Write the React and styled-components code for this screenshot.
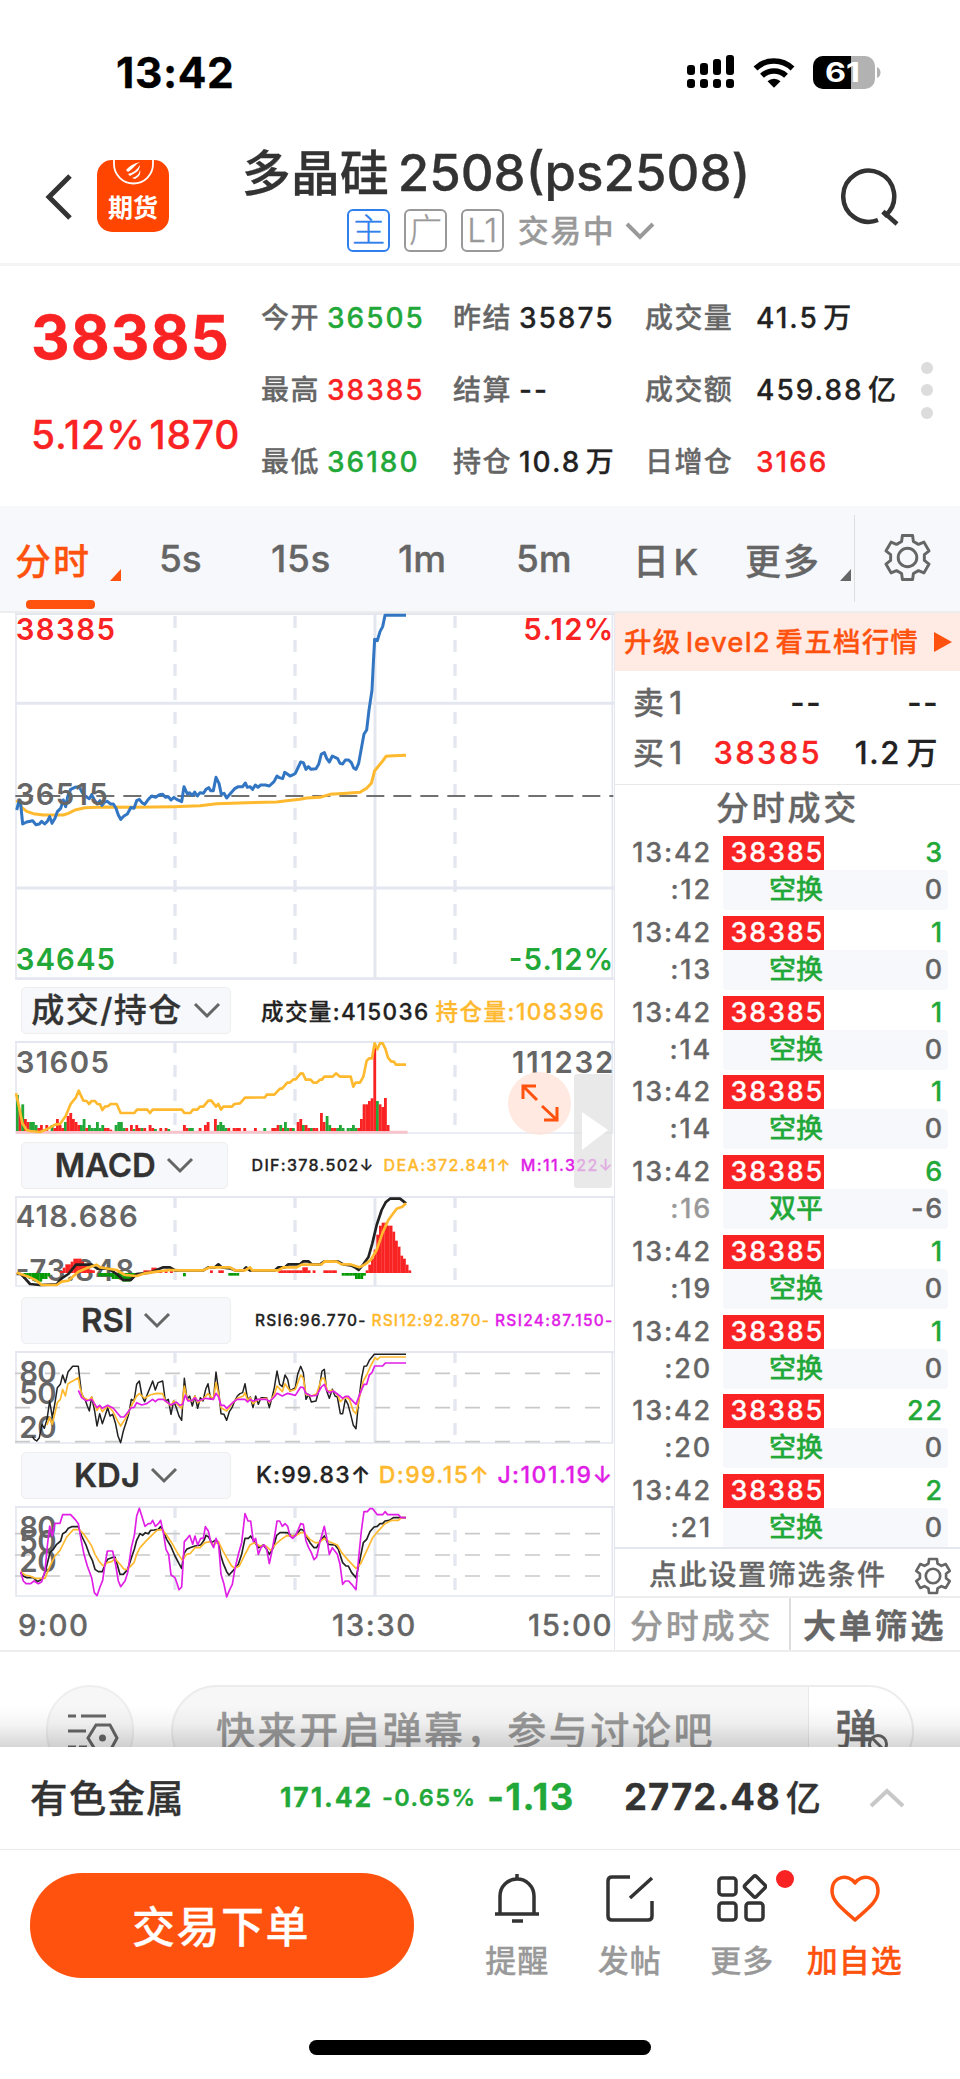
import React from "react";
import styled, { createGlobalStyle } from "styled-components";

const C = {
  red: "#fa2323", green: "#22a839", orange: "#ff520e", ink: "#222", dark: "#333",
  grey: "#666", light: "#999", line: "#e4e7ef", amber: "#ffb92e", magenta: "#e01ee6", blue: "#3276c3",
};

const Global = createGlobalStyle`
  * { box-sizing: border-box; }
  body { margin: 0; background: #fff; font-family: Inter, "Noto Sans CJK SC", sans-serif; font-weight: 500; -webkit-text-stroke: .3px; }
  svg { display: block; }
`;

const Screen = styled.main`
  width: 960px; height: 2079px; overflow: hidden; background: #fff; color: ${C.dark};
  display: flex; flex-direction: column;
`;
const Text = styled.span`
  font-size: ${(p) => p.$size}px; color: ${(p) => p.$color || "inherit"};
  font-weight: ${(p) => p.$weight || 500}; letter-spacing: ${(p) => p.$track || 0}px;
  word-spacing: ${(p) => p.$word || 0}px; line-height: 1.2; white-space: pre;
`;

/* status bar */
const StatusBar = styled.div`
  height: 144px; padding: 0 79px 0 116px; display: flex; align-items: center; justify-content: space-between;
`;
const StatusIcons = styled.div`display: flex; align-items: center; gap: 18px;`;

/* header */
const Header = styled.header`
  height: 122px; border-bottom: 3px solid #f4f4f4; display: grid;
  grid-template-columns: 97px 72px 147px 360px 165px 60px; padding-bottom: 8px;
`;
const HeaderSlot = styled.div`padding-top: ${(p) => p.$top}px;`;
const TitleBlock = styled.div`display: flex; flex-direction: column; align-items: center;`;
const Title = styled.h1`
  margin: 0; height: 65px; font-size: 49px; line-height: 58px; font-weight: 500; white-space: nowrap;
  span { font-size: 51px; margin-left: 9px; }
`;
const TagRow = styled.div`display: flex; align-items: center; height: 43px; width: 308px; margin-left: 10px;`;
const Tag = styled.span`
  width: 43px; height: 43px; margin-right: 14px; border: 2px solid ${(p) => p.$color}; border-radius: 6px;
  color: ${(p) => p.$color}; font-size: 33px; font-weight: 300; line-height: 38px; text-align: center;
`;

/* quote */
const Quote = styled.section`
  height: 240px; padding: 15px 0 9px 31px; display: grid; grid-template-columns: 230px 660px 1fr;
`;
const PriceBlock = styled.div`display: flex; flex-direction: column; padding-top: 20px; gap: 39px; color: ${C.red};`;
const ChangeRow = styled.div`display: flex; gap: 4px;`;
const Stats = styled.div`
  display: grid; grid-template-columns: 66px 126px 66px 126px 111px 1fr; grid-template-rows: repeat(3, 72px);
  align-items: center; padding-top: 2px;
`;
const Dots = styled.div`display: flex; flex-direction: column; justify-content: center; gap: 10.500px;
  i { width: 12px; height: 12px; border-radius: 50%; background: #dcdcdc; }`;

/* period tabs */
const Tabs = styled.nav`
  height: 107px; background: #f7f8fb; border-bottom: 2px solid #ededed; padding-left: 15px;
  display: grid; grid-template-columns: 144px 112px 127px 118px 117px 112px 109px 1fr;
`;
const Tab = styled.div`
  position: relative; display: flex; align-items: center; font-size: ${(p) => p.$size || 37}px; color: ${(p) => (p.$active ? C.orange : C.grey)};
  letter-spacing: ${(p) => p.$track || 0}px; word-spacing: -5px; white-space: pre;
`;
const Corner = styled.i`
  position: absolute; left: 95px; top: 63px; border-left: 11px solid transparent; border-bottom: 12px solid currentColor;
`;
const Underline = styled.i`
  position: absolute; left: 11px; bottom: 2px; width: 69px; height: 9px; border-radius: 4px; background: ${C.orange};
`;
const SettingsCell = styled.div`
  margin: 9px 0; border-left: 1px solid #dedede; padding: 0 0 2px 28px; display: flex; align-items: center;
`;

/* body */
const Body = styled.div`height: 1039px; display: grid; grid-template-columns: 615px 345px; border-bottom: 2px solid #ededed;`;
const ChartColumn = styled.div`border-right: 1px solid ${C.line}; position: relative;`;
const IndicatorHead = styled.div`height: 61px; padding: 7px 0 0 21px; display: flex;`;
const Pill = styled.div`
  width: 210px; height: 47px; border: 1px solid #eee; border-radius: 5px; background: #f7f8fb;
  display: flex; align-items: center; justify-content: center; gap: 10px; color: ${C.dark};
`;
const Legend = styled.div`
  height: 48px; flex: 1; display: flex; align-items: center; padding-left: ${(p) => p.$left}px; gap: ${(p) => p.$gap}px;
`;
const Axis = styled.div`height: 50px; padding: 2px 1px 0 18px; display: grid; grid-template-columns: 314px 1fr auto; align-items: center;`;
const ExpandButton = styled.div`
  position: absolute; left: 508px; top: 459px; width: 63px; height: 63px; border-radius: 50%; background: rgba(255, 228, 218, .82);
`;
const Handle = styled.div`
  position: absolute; left: 574px; top: 461px; width: 38px; height: 114px; border-radius: 3px; background: rgba(224, 224, 224, .72);
  display: flex; align-items: center; justify-content: flex-end; padding-right: 4px;
`;

const Side = styled.aside`display: flex; flex-direction: column;`;
const Banner = styled.div`
  height: 58px; background: #ffebe4; color: ${C.orange}; display: flex; align-items: center; justify-content: space-between; padding: 0 8px 0 9px;
`;
const Book = styled.div`
  height: 114px; padding: 6px 21px 6px 18px; border-bottom: 1px solid #e8e8e8;
  display: grid; grid-template-columns: 60px 129px 1fr; grid-template-rows: 1fr 1fr; align-items: center;
  span:not(:nth-child(3n + 1)) { text-align: right; }
`;
const SideTitle = styled.div`height: 51px; display: flex; justify-content: center; padding-top: 4px;`;
const TradeList = styled.div`height: 713px; border-bottom: 2px solid ${C.line}; overflow: hidden;`;
const Trade = styled.div`
  height: 79.75px; display: grid; grid-template-columns: 97px 225px; column-gap: 11px; grid-template-rows: 34px 40px;
  font-size: 27px; font-weight: 550; letter-spacing: 1.8px; color: ${C.grey}; line-height: 34px;
`;
const TradeTime = styled.span`text-align: right; line-height: ${(p) => p.$lh}px; color: ${(p) => p.$color};`;
const TradeTop = styled.div`display: grid; grid-template-columns: 101px 1fr; padding-right: 4px; text-align: right; color: ${C.green};
  b { font-weight: 550; background: ${C.red}; color: #fff; }`;
const TradeBottom = styled.div`
  display: grid; grid-template-columns: 101px 1fr; padding-right: 4px; text-align: right; background: #f7f8fb; border-radius: 4px; line-height: 39px;
  b { font-weight: 500; color: ${C.green}; letter-spacing: 0; padding-right: 1px; }`;
const Filter = styled.div`height: 49px; border-bottom: 2px solid #ededed; display: flex; align-items: center; justify-content: space-between; padding: 6px 8px 0 34px;`;
const SideTabs = styled.div`flex: 1; display: grid; grid-template-columns: 176px 1fr; align-items: stretch;`;
const SideTab = styled.div`
  display: flex; align-items: center; padding-left: ${(p) => p.$left}px; border-right: ${(p) => (p.$rule ? "2px solid #ddd" : "0")};
  font-size: 33px; letter-spacing: ${(p) => p.$track}px; font-weight: ${(p) => (p.$bold ? 700 : 500)}; color: ${(p) => (p.$bold ? C.grey : C.light)};
`;

/* comment strip */
const Comments = styled.div`height: 95px; padding: 33px 46px 0; display: flex; gap: 37px; overflow: hidden; position: relative;
  &::after { content: ""; position: absolute; left: 0; right: 0; bottom: 0; height: 42px; background: linear-gradient(rgba(0,0,0,0), rgba(0,0,0,.04) 45%, rgba(0,0,0,.16)); }`;
const RoundButton = styled.div`width: 88px; height: 92px; flex: none; border-radius: 46px; border: 2px solid #eee; background: #f7f7f7;`;
const CommentBox = styled.div`
  width: 743px; height: 92px; flex: none; border-radius: 46px; border: 2px solid #ececec; background: #f7f7f7; overflow: hidden;
  display: grid; grid-template-columns: 635px 1fr;
`;
const CommentHint = styled.div`padding-left: 43px; display: flex; align-items: center;`;
const DanmuToggle = styled.div`background: #fff; border-left: 1px solid #e8e8e8; padding: 18px 0 0 26px; position: relative;
  svg { position: absolute; left: 58px; top: 46px; }`;

/* sector row and action bar */
const Sector = styled.div`
  height: 103px; border-bottom: 1px solid #ebebeb; padding: 0 55px 0 30px; display: grid; align-items: center;
  grid-template-columns: 250px 102px 105px 137px 1fr 36px; background: #fff;
`;
const Turnover = styled.div`display: flex; align-items: center; gap: 5px;`;
const Actions = styled.div`height: 142px; padding: 23px 0 0 30px; display: grid; grid-template-columns: 384px 47px repeat(4, 112.5px);`;
const TradeButton = styled.button`
  height: 105px; border: 0; border-radius: 52px; background: ${C.orange}; color: #fff; font: inherit; font-size: 43px; letter-spacing: 1.5px; padding: 0 2px 3px 0;
`;
const Action = styled.div`
  position: relative; display: flex; flex-direction: column; align-items: center; gap: 16px; font-size: 31px; line-height: 44px;
  letter-spacing: 1px; color: ${(p) => p.$color || C.light};
`;
const Badge = styled.i`position: absolute; right: 5px; top: -3px; width: 18px; height: 18px; border-radius: 50%; background: ${C.red};`;
const HomeBar = styled.div`width: 342px; height: 15px; margin: 48px auto 0; border-radius: 8px; background: #000;`;

const Chevron = ({ w, h, s = 3, color, up }) => (
  <svg width={w} height={h} viewBox={`0 0 ${w} ${h}`} fill="none" stroke={color} strokeWidth={s}>
    <path d={up ? `M2 ${h - 2}L${w / 2} 3L${w - 2} ${h - 2}` : `M2 2L${w / 2} ${h - 3}L${w - 2} 2`} />
  </svg>
);

const gearPath = () => {
  const pts = [];
  for (let k = 0; k < 6; k += 1) {
    [[-20, 17.5], [-13, 23], [13, 23], [20, 17.5]].forEach(([d, r]) => {
      const a = ((k * 60 + d - 90) * Math.PI) / 180;
      pts.push(`${(25 + r * Math.cos(a)).toFixed(1)} ${(25 + r * Math.sin(a)).toFixed(1)}`);
    });
  }
  return `M${pts.join("L")}Z`;
};
const Gear = ({ size, s }) => (
  <svg width={size} height={size} viewBox="0 0 50 50" fill="none" stroke={C.grey} strokeWidth={s} strokeLinejoin="round">
    <path d={gearPath()} /><circle cx="25" cy="25" r="9.5" />
  </svg>
);

const Signal = () => (
  <svg width="48" height="34" viewBox="0 0 48 34">
    {[0, 1, 2, 3].map((i) => {
      const top = [10, 8, 4, 0][i];
      return <g key={i}><rect x={i * 13} y={top} width="8" height={20 - top} rx="3" /><rect x={i * 13} y="24" width="8" height="9" rx="3" /></g>;
    })}
  </svg>
);
const Wifi = () => (
  <svg width="42" height="31" viewBox="0 0 42 31" fill="none" stroke="#000" strokeWidth="5.6">
    <path d="M2.500 11.500A26.500 26.500 0 0 1 39.500 11.500" /><path d="M9 18.700A17.500 17.500 0 0 1 33 18.700" />
    <path d="M14.500 24.200A9.500 9.500 0 0 1 27.500 24.200L21 30.800Z" fill="#000" stroke="none" />
  </svg>
);
const Battery = () => (
  <svg width="68" height="33" viewBox="0 0 68 33">
    <clipPath id="cell"><rect width="62" height="33" rx="10" /></clipPath>
    <g clipPath="url(#cell)"><rect width="62" height="33" fill="#b2b2b2" /><rect width="38" height="33" /></g>
    <path d="M64 11q3.500 1.500 3.500 5.500t-3.500 5.500z" fill="#b2b2b2" />
    <text x="12" y="26" fontSize="27" fontWeight="700" fill="#fff" textLength="35" lengthAdjust="spacingAndGlyphs">61</text>
  </svg>
);
const Logo = () => (
  <svg width="72" height="72" viewBox="0 0 72 72">
    <rect width="72" height="72" rx="15" fill="#ff4500" />
    <path d="M17 0v4a19 19 0 0 0 39 0V0" fill="none" stroke="#fff" strokeWidth="1.800" />
    <path d="M29 10q5-6 14-8q-4 2-6 5q-3 3-6 5zM31 14q8-2 12-9q0 5-5 8l-5 3zM35 18q7-2 8-8q2 5-5 9z" fill="#fff" />
    <text x="11" y="57" fontSize="25" fontWeight="700" fill="#fff" textLength="50">期货</text>
  </svg>
);

const DashV = ({ x, y1, y2 }) => <line x1={x} x2={x} y1={y1} y2={y2} stroke={C.line} strokeWidth="10" strokeDasharray="36 36" />;
const Label = ({ x, y, w, color = C.grey, children, end, size = 88 }) => (
  <text x={end ? x - w : x} y={y} fontSize={size} fontWeight="560" fill={color} textLength={w}>{children}</text>
);
const Frame = ({ top, h, dash, solid = true }) => (
  <g>
    <path d={`M48 ${top}V${top + h - 6}H1837V${top}`} fill="none" stroke={C.line} strokeWidth="5" />
    <path d={`M45 ${top + 3}H1842`} stroke={C.line} strokeWidth="6" />
    {[525, 885, 1365].map((x) => <DashV key={x} x={x} y1={top + (dash || 0)} y2={top + h - 12} />)}
    {solid && <line x1="1125" x2="1125" y1={top} y2={top + h - 6} stroke={C.line} strokeWidth="9" />}
  </g>
);
const Line = ({ pts, color, w = 8 }) => <polyline points={pts} fill="none" stroke={color} strokeWidth={w} strokeLinejoin="round" />;
const Levels = ({ ys }) => ys.map((y) => <line key={y} x1="45" x2="1818" y1={y} y2={y} stroke="#c9c9c9" strokeWidth="5" strokeDasharray="45 45" />);

const PRICE = "50,630 58,600 62,612 68,672 80,666 98,662 108,674 118,672 125,664 134,672 142,664 149,650 156,670 165,655 172,635 182,625 190,600 197,620 203,590 212,568 225,562 238,560 245,575 255,588 268,596 275,584 283,600 292,612 300,602 306,616 314,606 322,604 332,612 340,612 348,625 355,645 362,658 372,648 382,642 393,622 402,625 410,602 418,598 426,608 434,613 445,598 455,588 467,592 478,584 488,583 497,592 505,590 513,600 522,592 530,598 545,605 552,560 562,582 568,578 577,586 584,576 592,588 600,578 610,580 618,568 626,563 632,572 640,572 648,532 657,550 664,583 672,580 680,594 690,582 704,566 715,560 728,560 736,549 742,562 750,560 758,568 766,555 774,562 782,555 796,555 808,558 822,545 831,528 838,533 848,536 854,517 862,522 870,528 880,524 886,520 902,486 910,488 918,508 925,500 933,508 948,506 956,493 964,462 973,458 980,475 988,486 997,468 1013,476 1020,490 1028,492 1036,480 1046,480 1054,488 1061,504 1068,508 1076,490 1085,440 1092,402 1100,390 1107,330 1116,270 1120,190 1124,118 1132,122 1140,95 1148,80 1155,46 1218,46";
const AVG = "50,600 65,622 80,634 100,641 130,645 190,645 205,640 225,630 255,623 310,621 400,622 520,620 600,617 650,611 740,608 830,606 860,602 900,598 920,594 960,592 990,583 1040,580 1080,577 1100,565 1114,550 1124,512 1145,487 1158,469 1180,467 1218,466";
const OI = "48,370 58,415 67,460 80,480 90,483 120,486 140,478 165,464 180,462 197,438 212,402 228,382 236,362 250,392 260,393 267,402 275,393 285,393 292,402 300,403 307,420 315,410 325,408 332,402 350,402 362,429 403,429 411,419 442,419 450,429 458,419 546,419 553,429 571,429 579,419 592,419 600,410 610,410 625,392 634,392 648,410 655,402 663,419 670,410 696,410 703,402 720,400 735,383 795,382 800,374 823,374 840,356 846,356 862,338 870,338 880,328 887,328 902,310 909,311 917,329 932,329 940,338 950,338 960,329 966,329 973,320 998,320 1008,310 1020,320 1052,320 1060,350 1067,338 1080,338 1090,320 1100,272 1108,265 1116,265 1124,220 1132,238 1140,220 1148,220 1156,236 1164,263 1174,275 1182,275 1188,284 1218,284";
const DIF = "50,912 62,912 75,925 90,942 120,945 170,943 185,925 205,912 228,884 275,884 292,896 325,896 350,912 370,930 392,930 410,912 450,908 490,892 510,892 525,901 610,901 625,892 645,892 655,883 665,892 690,895 705,901 730,901 738,892 750,901 825,901 835,892 855,892 865,883 900,883 910,874 925,874 935,883 960,883 972,875 1000,875 1015,875 1030,883 1052,886 1066,893 1076,900 1090,883 1105,862 1117,820 1130,765 1145,720 1157,697 1170,686 1200,686 1218,700";
const DEA = "50,908 70,915 90,922 110,932 125,945 170,945 185,935 205,932 235,905 260,895 290,884 300,892 350,900 375,915 410,918 435,910 470,905 510,900 540,901 610,901 630,892 690,892 705,901 735,901 750,892 757,901 835,901 850,892 890,892 905,884 965,883 975,874 1010,875 1025,883 1050,883 1078,892 1095,883 1112,870 1130,840 1147,790 1165,750 1190,716 1207,710 1218,700";
const RSI6 = "97,437 103,445 110,450 118,440 126,400 133,412 141,385 149,330 157,380 165,335 172,290 181,280 188,252 196,275 204,243 218,226 235,226 240,270 245,310 255,325 262,345 268,360 275,318 284,360 291,405 299,368 307,398 315,375 323,350 330,375 338,370 346,395 354,435 362,455 370,420 378,395 386,370 394,325 402,330 410,280 418,270 426,315 434,332 442,310 450,290 458,270 466,297 474,275 488,270 496,330 505,325 513,370 521,330 529,350 537,375 545,388 553,262 561,325 569,315 577,345 585,315 593,352 601,320 609,330 617,295 624,278 632,325 641,320 648,243 656,300 663,368 672,370 680,388 688,362 696,350 704,330 712,315 720,308 728,305 735,278 743,325 751,318 759,350 767,315 775,340 783,320 800,320 808,350 816,320 823,290 831,240 839,280 847,287 855,252 863,265 870,300 886,290 893,250 902,226 910,245 918,325 926,310 934,333 948,330 956,300 966,240 973,235 980,300 988,322 997,295 1005,315 1012,318 1021,368 1028,368 1036,325 1044,340 1052,370 1060,403 1068,413 1076,330 1085,260 1092,226 1100,225 1108,208 1123,190 1218,190";
const RSI12 = "141,402 149,378 157,400 172,335 181,325 188,295 196,315 204,278 218,270 235,260 240,290 250,320 268,328 275,318 291,358 299,345 307,362 323,345 338,360 354,392 362,405 378,380 394,345 410,315 418,308 434,322 450,312 470,307 488,308 496,330 513,345 521,330 545,352 553,285 561,325 577,330 585,315 593,335 609,325 624,308 640,325 648,275 656,310 663,350 680,360 696,338 712,322 730,315 735,305 743,328 751,320 759,338 775,325 800,322 808,335 823,310 831,285 847,302 855,278 870,300 886,295 902,252 910,262 918,310 934,315 950,308 965,262 973,262 982,300 997,298 1012,310 1021,332 1036,318 1048,325 1060,360 1068,368 1080,312 1090,270 1100,252 1112,225 1125,200 1132,206 1140,198 1218,198";
const RSI24 = "235,298 245,320 260,330 275,325 291,350 299,343 307,352 323,343 340,352 362,378 372,378 394,350 402,350 410,335 425,342 440,338 458,325 466,332 474,325 490,325 513,342 529,333 540,343 548,340 556,312 564,330 577,328 585,320 593,330 617,322 640,325 648,307 656,318 663,343 672,343 680,352 700,333 712,325 735,325 743,333 751,325 759,330 775,325 800,325 808,332 823,318 831,307 847,315 863,307 886,313 902,288 910,290 918,307 934,315 950,313 964,288 973,280 980,298 988,305 1000,300 1020,315 1028,322 1036,316 1045,316 1060,332 1068,340 1080,308 1092,280 1100,280 1108,252 1116,245 1124,225 1148,225 1156,216 1218,216";
const K = "62,845 70,855 80,860 100,860 112,872 125,865 133,850 140,825 150,785 160,775 170,760 182,750 188,728 197,723 205,712 215,707 235,707 245,735 258,762 268,790 277,808 285,835 295,842 307,842 315,820 323,805 335,800 345,798 352,822 360,850 370,850 383,835 395,798 403,775 410,748 420,728 428,733 436,725 445,728 452,718 462,717 475,715 482,707 492,725 500,745 512,765 525,795 537,818 545,832 552,788 560,775 570,770 585,765 602,762 612,748 618,733 626,738 635,755 645,748 655,752 662,792 670,818 680,842 687,852 700,838 715,820 725,790 735,742 745,742 752,735 765,755 775,770 790,762 800,775 808,790 820,770 830,733 840,725 862,725 875,735 887,733 902,715 910,718 920,738 930,755 942,770 950,770 960,750 973,735 985,760 1005,762 1015,775 1028,815 1038,825 1045,825 1055,845 1068,860 1078,815 1090,755 1100,745 1110,722 1122,708 1132,706 1140,698 1148,698 1155,690 1168,688 1180,680 1218,680";
const D = "62,842 75,852 90,855 105,862 135,862 148,830 165,795 180,778 200,738 220,716 237,716 250,728 262,745 275,765 285,790 298,812 310,825 322,815 335,812 345,803 360,820 372,835 383,835 402,815 410,790 420,770 440,748 455,733 472,717 488,716 500,733 515,755 530,782 547,808 560,790 570,788 585,770 600,770 615,755 632,752 640,762 655,752 668,778 680,800 695,825 705,832 718,825 735,790 750,762 762,755 780,765 798,765 812,778 825,762 840,748 860,734 885,735 902,725 912,725 930,745 945,755 957,755 973,742 988,752 1012,762 1025,785 1045,808 1068,832 1082,818 1102,775 1118,740 1130,725 1155,698 1175,688 1195,688 1205,680 1218,680";
const J = "62,842 70,870 78,878 92,878 102,870 115,878 125,872 135,840 142,765 149,705 157,735 165,697 180,697 188,671 212,671 225,685 235,698 243,745 252,790 262,825 275,860 283,905 291,914 300,888 308,868 315,820 322,780 338,780 347,822 355,870 362,887 375,870 383,845 394,770 403,733 410,675 418,652 427,680 435,706 445,698 452,698 458,688 466,706 475,698 482,688 490,725 498,775 506,790 513,852 525,860 532,880 537,896 545,888 553,752 562,742 569,733 578,760 585,735 593,762 602,742 610,742 616,707 625,720 632,752 641,770 648,742 656,762 663,850 672,880 680,918 688,898 697,880 705,832 715,790 725,755 735,668 744,690 752,690 760,752 767,742 775,790 783,770 793,762 800,775 808,818 816,780 824,735 831,690 839,690 847,706 855,698 863,706 870,735 878,742 887,733 895,715 902,698 910,700 918,750 926,770 934,785 942,806 950,798 960,752 973,706 980,740 988,790 997,770 1012,790 1020,820 1028,880 1036,870 1046,870 1055,880 1068,896 1076,800 1084,720 1092,662 1102,662 1110,653 1118,653 1132,671 1148,671 1155,662 1163,671 1195,671 1203,680 1218,680";

const VOLUME = [
  [48, 108, 1], [56, 62, 0], [64, 80, 1], [72, 36, 0], [80, 27, 0], [88, 27, 1], [96, 27, 1], [104, 18, 1], [112, 9, 0], [120, 18, 0], [128, 6, 1], [136, 18, 0], [152, 18, 1], [160, 9, 0], [168, 36, 0], [176, 18, 0], [184, 9, 0], [192, 27, 1], [200, 45, 0], [208, 54, 0], [216, 36, 0], [224, 27, 0], [232, 18, 0], [240, 18, 1], [248, 36, 1], [256, 9, 0], [264, 18, 1], [272, 9, 1], [280, 9, 1], [288, 27, 1], [296, 9, 1], [304, 18, 1], [312, 9, 0], [320, 9, 0], [328, 4, 0], [344, 18, 1], [352, 27, 1], [360, 27, 1], [368, 9, 1], [376, 9, 0], [390, 18, 0], [398, 6, 1], [406, 18, 0], [414, 9, 0], [422, 9, 1], [430, 9, 0], [446, 18, 0], [454, 9, 0], [462, 6, 1], [478, 9, 0], [494, 9, 0], [502, 6, 1], [549, 18, 0], [557, 9, 0], [565, 9, 1], [573, 9, 1], [596, 9, 0], [612, 18, 0], [620, 27, 0], [642, 36, 0], [650, 18, 1], [658, 27, 1], [666, 18, 1], [674, 9, 1], [682, 9, 0], [698, 9, 0], [706, 9, 0], [714, 9, 0], [730, 9, 0], [762, 9, 0], [790, 9, 1], [814, 9, 0], [822, 9, 0], [830, 18, 0], [838, 18, 1], [846, 9, 0], [852, 27, 1], [860, 9, 1], [868, 9, 0], [876, 9, 1], [890, 27, 0], [898, 36, 0], [906, 18, 1], [914, 18, 0], [922, 9, 0], [930, 9, 1], [938, 9, 0], [946, 9, 0], [960, 54, 0], [968, 27, 0], [977, 45, 1], [985, 18, 1], [993, 9, 0], [1001, 9, 0], [1009, 9, 1], [1017, 18, 1], [1025, 9, 1], [1040, 9, 1], [1048, 9, 1], [1056, 18, 1], [1064, 9, 1], [1072, 9, 0], [1080, 36, 0], [1088, 80, 0], [1096, 80, 0], [1104, 90, 0], [1112, 98, 0], [1120, 255, 0], [1128, 90, 1], [1136, 80, 0], [1144, 72, 0], [1152, 99, 0], [1160, 18, 0],
];
const HISTOGRAM = [
  [180, 6], [188, 16], [196, 26], [204, 26], [212, 34], [220, 43], [228, 43], [236, 43], [244, 34], [252, 26], [260, 20], [268, 10], [276, 8], [430, 8], [438, 8], [446, 8], [454, 16], [462, 16], [470, 8], [478, 8], [494, 8], [510, 8], [630, 8], [655, 8], [663, 8], [835, 8], [843, 8], [851, 8], [859, 8], [867, 8], [875, 8], [883, 8], [891, 8], [899, 8], [907, 17], [915, 17], [923, 8], [938, 8], [970, 8], [978, 8], [986, 8], [994, 8], [1002, 8],
  [1097, 8], [1105, 25], [1113, 43], [1121, 70], [1129, 115], [1137, 142], [1145, 151], [1153, 151], [1161, 142], [1169, 142], [1177, 124], [1185, 97], [1193, 79], [1201, 52], [1209, 43], [1217, 25], [1225, 8],
  [70, -18], [78, -10], [86, -18], [94, -18], [102, -26], [110, -26], [118, -26], [126, -18], [134, -18], [142, -10], [295, -10], [303, -10], [311, -10], [319, -10], [327, -10], [335, -18], [343, -18], [351, -18], [359, -18], [367, -26], [375, -26], [383, -26], [391, -18], [399, -10], [549, -10], [685, -8], [693, -8], [701, -8], [709, -8], [1025, -8], [1033, -8], [1041, -8], [1049, -8], [1057, -8], [1065, -18], [1073, -18], [1081, -18], [1089, -8],
];

const PriceChart = () => (
  <svg width="614" height="367" viewBox="0 39 1842 1101">
    <Frame top={39} h={1101} dash={9} />
    <path d="M45 310H1842M45 864H1842M45 1138H1842" stroke={C.line} strokeWidth="9" />
    <line x1="46" x2="1840" y1="588" y2="588" stroke="#707070" strokeWidth="6" strokeDasharray="54 27" />
    <Line pts={AVG} color={C.amber} w={9} />
    <Line pts={PRICE} color={C.blue} w={9} />
    <Label x={47} y={121} w={298} color={C.red}>38385</Label>
    <Label x={47} y={614} w={276}>36515</Label>
    <Label x={47} y={1110} w={298} color={C.green}>34645</Label>
    <Label x={1840} end y={121} w={270} color={C.red}>5.12%</Label>
    <Label x={1840} end y={1110} w={314} color={C.green}>-5.12%</Label>
  </svg>
);
const VolumeChart = () => (
  <svg width="614" height="94" viewBox="0 213 1842 282">
    <Frame top={213} h={282} solid={false} />
    <path d="M48 487H1223" stroke="#f8c4cc" strokeWidth="9" />
    {VOLUME.map(([x, h, g]) => <rect key={x} x={x} y={483 - h} width="8.500" height={h} fill={g ? C.green : C.red} />)}
    <Line pts={OI} color={C.amber} />
    <Label x={47} y={308} w={280}>31605</Label>
    <Label x={1840} end y={308} w={304}>111232</Label>
  </svg>
);
const MacdChart = () => (
  <svg width="614" height="94" viewBox="0 678 1842 282">
    <Frame top={678} h={276} />
    <Label x={47} y={772} w={366}>418.686</Label>
    <Label x={47} y={934} w={356}>-73.848</Label>
    {HISTOGRAM.map(([x, v]) => <rect key={x} x={x} y={v > 0 ? 909 - v : 909} width="8.500" height={Math.abs(v)} fill={v > 0 ? C.red : "#049a04"} />)}
    <Line pts={DIF} color="#222" />
    <Line pts={DEA} color={C.amber} />
  </svg>
);
const RsiChart = () => (
  <svg width="614" height="94" viewBox="0 180 1842 282">
    <Frame top={180} h={282} />
    <Levels ys={[247, 350, 452]} />
    <Label x={58} y={276} w={112}>80</Label>
    <Label x={58} y={340} w={112}>50</Label>
    <Label x={58} y={441} w={112}>20</Label>
    <Line pts={RSI6} color="#222" w={4.5} />
    <Line pts={RSI12} color={C.amber} w={5} />
    <Line pts={RSI24} color={C.magenta} w={5} />
  </svg>
);
const KdjChart = () => (
  <svg width="614" height="94" viewBox="0 645 1842 282">
    <Frame top={645} h={276} />
    <Levels ys={[728, 792, 855]} />
    <Label x={58} y={741} w={112}>80</Label>
    <Label x={58} y={782} w={112}>50</Label>
    <Label x={58} y={842} w={112}>20</Label>
    <Line pts={K} color="#222" w={5} />
    <Line pts={D} color={C.amber} w={5} />
    <Line pts={J} color={C.magenta} w={5} />
  </svg>
);

const Indicator = ({ name, left, gap, legend, children, track, weight = 560 }) => (
  <div>
    <IndicatorHead>
      <Pill><Text $size={33} $track={track} $weight={weight}>{name}</Text><Chevron w={28} h={17} color={C.grey} /></Pill>
      <Legend $left={left} $gap={gap}>
        {legend.map(([t, color, size, tr]) => <Text key={t} $size={size} $color={color} $track={tr}>{t}</Text>)}
      </Legend>
    </IndicatorHead>
    {children}
  </div>
);

const STATS = [
  ["今开", "36505", C.green], ["昨结", "35875", C.ink], ["成交量", "41.5 万", C.ink],
  ["最高", "38385", C.red], ["结算", "--", C.ink], ["成交额", "459.88 亿", C.ink],
  ["最低", "36180", C.green], ["持仓", "10.8 万", C.ink], ["日增仓", "3166", C.red],
];
const TRADES = [
  ["12", 3], ["13", 1], ["14", 1], ["14", 1], ["16", 6, "双平", "-6"], ["19", 1], ["20", 1], ["20", 22], ["21", 2],
];

export default function App() {
  return (
    <Screen>
      <Global />
      <StatusBar>
        <Text $size={42.5} $weight={650} $color="#000" $track={0.6}>13:42</Text>
        <StatusIcons><Signal /><Wifi /><Battery /></StatusIcons>
      </StatusBar>

      <Header>
        <HeaderSlot $top={30}>
          <svg width="97" height="46" viewBox="0 0 97 46" fill="none" stroke={C.dark} strokeWidth="5"><path d="M70 2L49 23L70 44" /></svg>
        </HeaderSlot>
        <HeaderSlot $top={16}><Logo /></HeaderSlot>
        <span />
        <TitleBlock>
          <Title>多晶硅<span>2508(ps2508)</span></Title>
          <TagRow>
            <Tag $color="#2f80ed">主</Tag><Tag $color="#999">广</Tag><Tag $color="#999">L1</Tag>
            <Text $size={31} $color={C.light} $track={1.5}>交易中 </Text>
            <Chevron w={30} h={18} s={4} color={C.light} />
          </TagRow>
        </TitleBlock>
        <span />
        <HeaderSlot $top={24}>
          <svg width="60" height="60" viewBox="0 0 60 60" fill="none" stroke={C.dark} strokeWidth="4.500">
            <path d="M37 52A25.500 25.500 0 1 1 45 47L42 44" /><path d="M42 43.500L56 56" />
          </svg>
        </HeaderSlot>
      </Header>

      <Quote>
        <PriceBlock>
          <Text $size={60} $weight={750} $track={1}>38385</Text>
          <ChangeRow><Text $size={39} $track={0.8}>5.12%</Text><Text $size={39} $track={0.8}>1870</Text></ChangeRow>
        </PriceBlock>
        <Stats>
          {STATS.map(([label, value, color]) => (
            <React.Fragment key={label}>
              <Text $size={28} $color={C.grey} $track={1.4}>{label}</Text>
              <Text $size={28} $color={color} $track={2} $word={-5}>{value}</Text>
            </React.Fragment>
          ))}
        </Stats>
        <Dots><i /><i /><i /></Dots>
      </Quote>

      <Tabs>
        <Tab $active $size={36} $track={2}>分时<Corner /><Underline /></Tab>
        <Tab>5s</Tab><Tab $track={0.6}>15s</Tab><Tab>1m</Tab><Tab>5m</Tab><Tab $size={36}>日 K</Tab>
        <Tab $size={36} $track={2}>更多<Corner /></Tab>
        <SettingsCell><Gear size={49} s={3} /></SettingsCell>
      </Tabs>

      <Body>
        <ChartColumn>
          <PriceChart />
          <Indicator name="成交/持仓" track={1.5} weight={500} left={30} gap={6} legend={[["成交量:415036", C.ink, 22.5, 1.4], ["持仓量:108396", C.amber, 22.5, 1.5]]}><VolumeChart /></Indicator>
          <Indicator name="MACD" left={24} gap={9} legend={[["DIF:378.502↓", C.ink, 16, 1.3], ["DEA:372.841↑", C.amber, 16, 1.4], ["M:11.322↓", C.magenta, 16, 1.4]]}><MacdChart /></Indicator>
          <Indicator name="RSI" left={24} gap={5} legend={[["RSI6:96.770-", C.ink, 15.5, 1.2], ["RSI12:92.870-", C.amber, 15.5, 1.1], ["RSI24:87.150-", C.magenta, 15.5, 1.3]]}><RsiChart /></Indicator>
          <Indicator name="KDJ" left={25} gap={7} legend={[["K:99.83↑", C.ink, 23, 1.2], ["D:99.15↑", C.amber, 23, 1.4], ["J:101.19↓", C.magenta, 23, 1.5]]}><KdjChart /></Indicator>
          <Axis>
            {["9:00", "13:30", "15:00"].map((t) => <Text key={t} $size={29.5} $color={C.grey} $track={1.5}>{t}</Text>)}
          </Axis>
          <ExpandButton>
            <svg width="63" height="63" viewBox="0 0 63 63" fill="none" stroke={C.orange} strokeWidth="3">
              <path d="M29 28L15 14M15 27V14H28M34 34L49 48M36 48H49V35" />
            </svg>
          </ExpandButton>
          <Handle><svg width="27" height="40" viewBox="0 0 27 40"><path d="M1 1L27 19L1 39Z" fill="#fff" /></svg></Handle>
        </ChartColumn>

        <Side>
          <Banner>
            <Text $size={27.5} $track={1.2} $word={-4}>升级 level2 看五档行情</Text>
            <svg width="18" height="20" viewBox="0 0 18 20"><path d="M0 0L18 10L0 20Z" fill={C.orange} /></svg>
          </Banner>
          <Book>
            <Text $size={31} $color={C.grey} $word={-3}>卖 1</Text><Text $size={31} $color={C.ink} $track={1.5}>--</Text><Text $size={31} $color={C.ink} $track={1.5}>--</Text>
            <Text $size={31} $color={C.grey} $word={-3}>买 1</Text><Text $size={31} $color={C.red} $track={2.3}>38385</Text><Text $size={31} $color={C.ink} $track={1.5} $word={-4}>1.2 万</Text>
          </Book>
          <SideTitle><Text $size={33} $color={C.grey} $track={2.8}>分时成交</Text></SideTitle>
          <TradeList>
            {TRADES.map(([sec, n, kind = "空换", delta = "0"], i) => (
              <Trade key={i}>
                <TradeTime $lh={34} $color={C.grey}>13:42</TradeTime>
                <TradeTop><b>38385</b><span>{n}</span></TradeTop>
                <TradeTime $lh={39} $color={sec === "16" ? C.light : C.grey}>:{sec}</TradeTime>
                <TradeBottom><b>{kind}</b><span>{delta}</span></TradeBottom>
              </Trade>
            ))}
          </TradeList>
          <Filter><Text $size={28} $color={C.grey} $track={1.7}>点此设置筛选条件</Text><Gear size={38} s={3.5} /></Filter>
          <SideTabs>
            <SideTab $left={15} $track={2.8} $rule>分时成交</SideTab>
            <SideTab $left={12} $track={2.8} $bold>大单筛选</SideTab>
          </SideTabs>
        </Side>
      </Body>

      <Comments>
        <RoundButton>
          <svg width="84" height="88" viewBox="0 0 84 88" fill="none" stroke={C.grey} strokeWidth="3">
            <path d="M20 29H28M33 29H58M20 44H38M20 60H28M31 60H39M48 38H62L69 51L62 64H48L40 51Z" /><circle cx="54.500" cy="51" r="2" fill={C.grey} />
          </svg>
        </RoundButton>
        <CommentBox>
          <CommentHint><Text $size={39} $color={C.light} $track={2.6}>快来开启弹幕，参与讨论吧</Text></CommentHint>
          <DanmuToggle>
            <Text $size={42} $color={C.grey}>弹</Text>
            <svg width="22" height="22" viewBox="0 0 22 22" fill="#fff" stroke={C.grey} strokeWidth="3"><circle cx="11" cy="11" r="8.500" /><path d="M5 5L17 17" /></svg>
          </DanmuToggle>
        </CommentBox>
      </Comments>

      <Sector>
        <Text $size={37.5} $track={1.2}>有色金属</Text>
        <Text $size={26.5} $color={C.green} $weight={680} $track={1.9}>171.42</Text>
        <Text $size={23.5} $color={C.green} $weight={620} $track={1.4}>-0.65%</Text>
        <Text $size={36.5} $color={C.green} $weight={700} $track={1.3}>-1.13</Text>
        <Turnover><Text $size={36.5} $weight={650} $track={1}>2772.48</Text><Text $size={35}>亿</Text></Turnover>
        <Chevron w={36} h={20} s={4} color="#c8c8c8" up />
      </Sector>
      <Actions>
        <TradeButton>交易下单</TradeButton>
        <span />
        <Action>
          <svg width="50" height="50" viewBox="0 0 50 50" fill="none" stroke={C.dark} strokeWidth="3.500">
            <path d="M25 1V6M8 41V23a17 17 0 0 1 34 0V41M3 41H47M20 48H31" />
          </svg>提醒
        </Action>
        <Action>
          <svg width="50" height="50" viewBox="0 0 50 50" fill="none" stroke={C.dark} strokeWidth="3.500">
            <path d="M25 4H7Q3 4 3 8V43Q3 47 7 47H43Q47 47 47 43V28M47 5L25 25" />
          </svg>发帖
        </Action>
        <Action>
          <svg width="50" height="50" viewBox="0 0 50 50" fill="none" stroke={C.dark} strokeWidth="3.500" strokeLinejoin="round">
            <rect x="2" y="5" width="17" height="17" rx="3" /><rect x="2" y="30" width="17" height="17" rx="3" /><rect x="29" y="30" width="17" height="17" rx="3" />
            <rect x="30" y="5.500" width="16" height="16" rx="2" transform="rotate(45 38 13.500)" />
          </svg>更多<Badge />
        </Action>
        <Action $color={C.orange}>
          <svg width="52" height="50" viewBox="0 0 52 50" fill="none" stroke={C.orange} strokeWidth="3.500" strokeLinejoin="round">
            <path d="M26 10C20 1 3 2 3 18C3 29 15 37 26 47C37 37 49 29 49 18C49 2 32 1 26 10Z" />
          </svg>加自选
        </Action>
      </Actions>
      <HomeBar />
    </Screen>
  );
}
